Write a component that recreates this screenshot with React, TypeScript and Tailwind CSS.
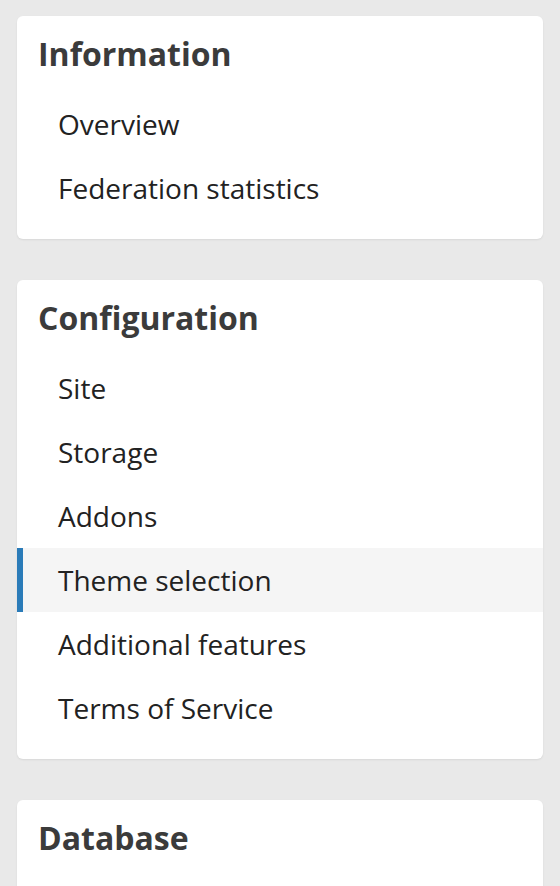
import React from 'react';

interface Section {
  title: string;
  items: string[];
  active?: string;
}

const sections: Section[] = [
  { title: 'Information', items: ['Overview', 'Federation statistics'] },
  {
    title: 'Configuration',
    items: ['Site', 'Storage', 'Addons', 'Theme selection', 'Additional features', 'Terms of Service'],
    active: 'Theme selection',
  },
  { title: 'Database', items: [] },
];

const SidebarCard: React.FC<{ section: Section }> = ({ section }) => (
  <div className="bg-white rounded-[6px] shadow-[0_1px_2px_rgba(0,0,0,0.08)] pb-[19px]">
    <h3 className="px-[21px] pt-[19px] pb-[19px] text-[32px] leading-[38px] font-bold text-[#3b3b3b]">
      {section.title}
    </h3>
    <ul>
      {section.items.map(item => {
        const isActive = item === section.active;
        return (
          <li
            key={item}
            className={
              isActive
                ? 'h-[64px] flex items-center pl-[35px] border-l-[6px] border-[#2a7bb8] bg-[#f5f5f5] text-[28px] text-[#222]'
                : 'h-[64px] flex items-center pl-[41px] text-[28px] text-[#222]'
            }
          >
            {item}
          </li>
        );
      })}
    </ul>
  </div>
);

export default function App() {
  return (
    <div
      className="h-screen overflow-hidden bg-[#e9e9e9] px-[17px] pt-[16px] flex flex-col gap-[41px]"
      style={{ fontFamily: '"Open Sans", "Noto Sans", sans-serif' }}
    >
      {sections.map(s => (
        <SidebarCard key={s.title} section={s} />
      ))}
    </div>
  );
}
